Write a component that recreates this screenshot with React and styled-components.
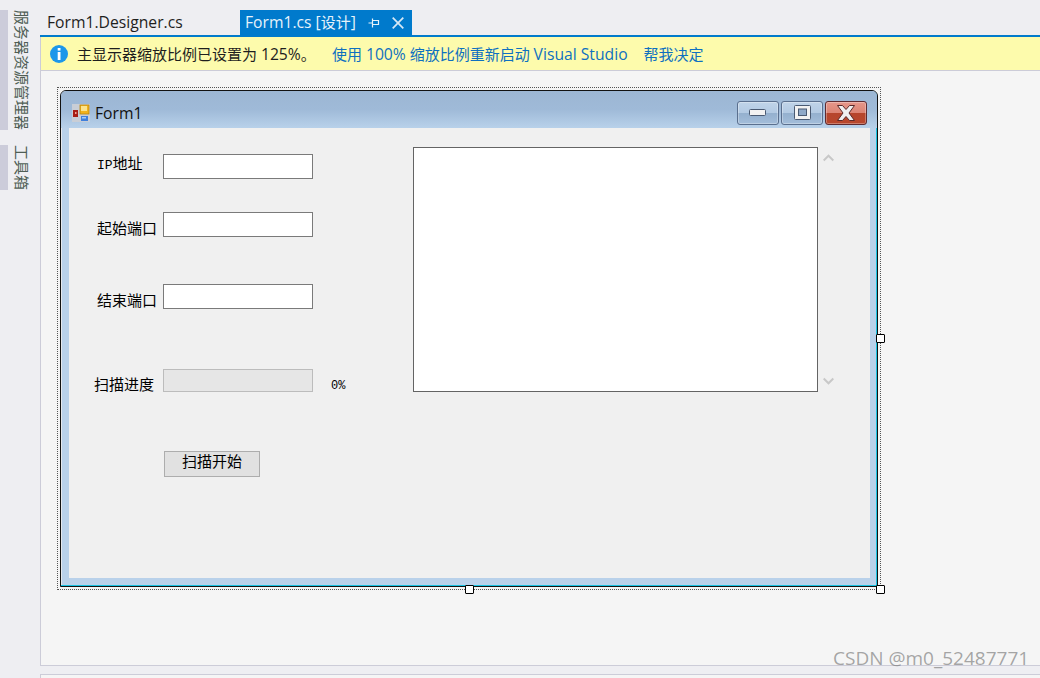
import React from "react";
import styled, { createGlobalStyle } from "styled-components";

const Global = createGlobalStyle`
  html, body { margin: 0; padding: 0; width: 1040px; height: 678px; overflow: hidden; background: #eeeef2; }
  * { box-sizing: border-box; }
  #root { width: 1040px; height: 678px; }
`;

const UI = `"Open Sans", "Noto Sans CJK SC", sans-serif`;
const CJK = `"Liberation Mono", "Noto Sans CJK SC", monospace`;

const Shell = styled.div`
  position: relative; display: flex; width: 1040px; height: 678px; background: #eeeef2; overflow: hidden;
`;
const Sidebar = styled.aside`
  width: 40px; flex: none; display: flex; flex-direction: column; gap: 15px; padding-top: 10px;
`;
const SideItem = styled.div`
  display: flex; height: ${p => p.$h}px;
`;
const SideBar = styled.div`
  width: 8px; background: #ccccda;
`;
const SideText = styled.div`
  writing-mode: vertical-rl; text-orientation: sideways; margin-left: 4px; width: 20px; font: 15px/20px "Noto Sans CJK SC", sans-serif;
  color: #4f5e55; white-space: nowrap;
`;
const Main = styled.main`
  flex: 1; display: flex; flex-direction: column; min-width: 0;
`;
const TabBar = styled.div`
  height: 35px; flex: none; display: flex; align-items: flex-end;
`;
const Tab = styled.div`
  height: 25px; display: flex; align-items: center; gap: 12px; font: 15px/25px ${UI};
  width: ${p => p.$w}px; padding-left: ${p => p.$pad}px;
  color: ${p => (p.$active ? "#e6f2fa" : "#1e1e1e")};
  background: ${p => (p.$active ? "#007acc" : "transparent")};
  white-space: nowrap;
`;
const UiLatin = styled.span`
  font-size: 15.7px;
`;
const TabActions = styled.span`
  display: flex; align-items: center; gap: 12px;
`;
const BlueLine = styled.div`
  height: 2px; flex: none; background: #007acc;
`;
const InfoBar = styled.div`
  height: 34px; flex: none; display: flex; align-items: center; background: #fdfbac; border-left: 1px solid #ccccd8;
  border-bottom: 1px solid #ccccd8; padding-left: 9px; font: 15px/20px ${UI}; color: #1e1e1e; white-space: nowrap;
`;
const InfoText = styled.span`
  margin-left: 9px; width: 255px;
`;
const InfoLink = styled.span`
  color: #0e70c0; margin-right: ${p => p.$gap}px;
`;
const Surface = styled.div`
  height: 595px; flex: none; background: #f5f5f5; border-left: 1px solid #ccccd8; border-bottom: 1px solid #ccccd8;
  padding: 16px 0 0 16px;
`;
const BottomPanel = styled.div`
  margin-top: 8px; flex: 1; background: #f5f5f5; border-left: 1px solid #ccccd8; border-top: 1px solid #ccccd8;
`;
const Selection = styled.div`
  position: relative; width: 824px; height: 503px; border: 1px dotted #555; padding: 2px;
`;
const Handle = styled.div`
  position: absolute; width: 9px; height: 9px; background: #fff; border: 1px solid #000; border-radius: 1px;
  left: ${p => p.$x}px; top: ${p => p.$y}px;
`;
const FormWindow = styled.div`
  width: 818px; height: 497px; display: flex; flex-direction: column; border: 1px solid #111;
  border-radius: 6px 6px 0 0; background: #b9d1ea; box-shadow: inset -1px -1px 0 #19c3e2, inset 1px 1px 0 #e4e8ee;
  padding-bottom: 8px; overflow: hidden;
`;
const TitleBar = styled.div`
  height: 37px; flex: none; display: flex; align-items: flex-start; padding: 0 10px 0 11px;
  background: linear-gradient(#9cb6d3, #9fbad8 50%, #b8d1ea);
`;
const IconSlot = styled.div`
  margin-top: 13px; height: 18px; display: flex;
`;
const FormTitle = styled.span`
  margin: 12px 0 0 5px; flex: 1; font: 15.7px/20px ${UI}; color: #111;
`;
const WinButtons = styled.div`
  display: flex; gap: 2px; margin-top: 10px;
`;
const WinButton = styled.div`
  width: 42px; height: 24px; border: 1px solid ${p => (p.$close ? "#5e2a30" : "#5a6f8e")}; border-radius: 3px; display: flex; align-items: center; justify-content: center;
  background: ${p => p.$close
    ? "linear-gradient(#e6978a, #dc8474 48%, #b6452c 50%, #b8472d)"
    : "linear-gradient(#c0d4e9, #b3cae3 48%, #94b0ce 50%, #a3bdda)"};
  box-shadow: inset 0 0 0 1px rgba(255,255,255,.3);
`;
const Client = styled.div`
  flex: 1; margin: 0 7px 0 8px; background: #f0f0f0; display: flex;
`;
const LeftColumn = styled.div`
  width: 344px; flex: none; display: flex; flex-direction: column;
`;
const Row = styled.div`
  display: flex; align-items: flex-start; height: ${p => p.$h}px; margin-top: ${p => p.$mt}px; padding-left: ${p => p.$pl}px;
`;
const FieldLabel = styled.label`
  width: ${p => p.$w}px; flex: none; margin-top: ${p => p.$mt}px; font: 15px/16px ${CJK}; color: #000; white-space: nowrap;
`;
const Latin = styled.span`
  font-size: 13px;
`;
const TextInput = styled.div`
  width: 150px; height: 25px; background: #fff; border: 1px solid #7a7a7a;
`;
const Progress = styled.div`
  width: 150px; height: 23px; background: #e6e6e6; border: 1px solid #bcbcbc;
`;
const Percent = styled.span`
  margin: 10px 0 0 18px; font: 12px/14px "Liberation Mono", monospace; color: #000;
`;
const ScanButton = styled.div`
  width: 96px; height: 26px; margin: 59px 0 0 95px; background: #e1e1e1; border: 1px solid #adadad; text-align: center;
  font: 15px/23px ${CJK}; color: #000;
`;
const RightColumn = styled.div`
  display: flex; padding-top: 19px;
`;
const OutputBox = styled.div`
  width: 405px; height: 245px; background: #fff; border: 1px solid #646464;
`;
const ScrollGutter = styled.div`
  width: 21px; height: 245px; display: flex; flex-direction: column; justify-content: space-between; align-items: center; padding: 7px 0;
`;

const Pin = () => (
  <svg width="12" height="10" viewBox="0 0 12 10" fill="none" stroke="#e6f2fa" strokeWidth="1.2">
    <path d="M.5 5H4.500M4.500 .5V9.500M4.500 2.500H10.500M4.500 6.500H10.500M10.500 2V7" />
  </svg>
);
const CloseX = () => (
  <svg width="12" height="12" viewBox="0 0 12 12" stroke="#d6e9f6" strokeWidth="1.7">
    <path d="M.7 .7 11.3 11.3M11.3 .7 .7 11.3" />
  </svg>
);
const InfoIcon = () => (
  <svg width="18" height="18" viewBox="0 0 18 18">
    <circle cx="9" cy="9" r="9" fill="#1c97ea" />
    <rect x="7.7" y="3" width="2.8" height="2.6" fill="#fff" />
    <rect x="7.7" y="7" width="2.8" height="8" fill="#fff" />
  </svg>
);
const FormIcon = () => (
  <svg width="18" height="18" viewBox="0 0 18 18">
    <rect width="18" height="18" fill="#c9ced6" />
    <rect x="1" y="6" width="5" height="7" fill="#a81d14" />
    <rect x="3" y="8" width="1.5" height="2" fill="#f0a090" />
    <rect x="8" y="1" width="9" height="9" fill="#f2b21c" stroke="#b9860e" strokeWidth=".8" />
    <rect x="9" y="2" width="6" height="5" fill="#fbe38c" />
    <rect x="9" y="12" width="7" height="5" fill="#3f7fdc" />
    <rect x="10" y="13" width="4" height="1.5" fill="#a9cdf5" />
  </svg>
);
const MinGlyph = () => (
  <svg width="18" height="8" viewBox="0 0 18 8">
    <rect x=".5" y=".5" width="16" height="6" rx="1" fill="#f2f2f2" stroke="#4a5a72" />
  </svg>
);
const MaxGlyph = () => (
  <svg width="17" height="16" viewBox="0 0 17 16">
    <rect x=".5" y=".5" width="16" height="14" rx="1" fill="#f2f2f2" stroke="#4a5a72" />
    <rect x="4.5" y="4" width="8" height="6.5" fill="#8fa9c8" stroke="#4a5a72" />
  </svg>
);
const CloseGlyph = () => (
  <svg width="18" height="16" viewBox="0 0 18 16">
    <path d="M.5 .5H5.500L9 4.500 12.500 .5H17.500L12 8 17.500 15.500H12.500L9 11.500 5.500 15.500H.5L6 8Z" fill="#f0f0f0" stroke="#5b2a2a" strokeWidth="1" />
  </svg>
);
const Chevron = ({ up }) => (
  <svg width="11" height="8" viewBox="0 0 11 8" fill="none" stroke="#c8c8c8" strokeWidth="2">
    <path d={up ? "M.7 6.500 5.500 1.700 10.300 6.500" : "M.7 1.500 5.500 6.300 10.300 1.500"} />
  </svg>
);
const Watermark = styled.div`
  position: absolute; left: 833px; top: 646px; font: 19px/24px "Open Sans", sans-serif; color: rgba(110,110,110,.6); white-space: nowrap;
`;

export default function App() {
  return (
    <Shell>
      <Global />
      <Sidebar>
        <SideItem $h={120}><SideBar /><SideText>服务器资源管理器</SideText></SideItem>
        <SideItem $h={45}><SideBar /><SideText>工具箱</SideText></SideItem>
      </Sidebar>
      <Main>
        <TabBar>
          <Tab $w={200} $pad={7}><UiLatin>Form1.Designer.cs</UiLatin></Tab>
          <Tab $active $w={172} $pad={5}>
            <span><UiLatin>Form1.cs [</UiLatin>设计<UiLatin>]</UiLatin></span>
            <TabActions><Pin /><CloseX /></TabActions>
          </Tab>
        </TabBar>
        <BlueLine />
        <InfoBar>
          <InfoIcon />
          <InfoText>主显示器缩放比例已设置为 <UiLatin>125%</UiLatin>。</InfoText>
          <InfoLink $gap={16}>使用 <UiLatin>100%</UiLatin> 缩放比例重新启动 <UiLatin>Visual Studio</UiLatin></InfoLink>
          <InfoLink $gap={0}>帮我决定</InfoLink>
        </InfoBar>
        <Surface>
          <Selection>
            <FormWindow>
              <TitleBar>
                <IconSlot><FormIcon /></IconSlot>
                <FormTitle>Form1</FormTitle>
                <WinButtons>
                  <WinButton><MinGlyph /></WinButton>
                  <WinButton><MaxGlyph /></WinButton>
                  <WinButton $close><CloseGlyph /></WinButton>
                </WinButtons>
              </TitleBar>
              <Client>
                <LeftColumn>
                  <Row $h={25} $mt={26} $pl={28}>
                    <FieldLabel $w={66} $mt={4}><Latin>IP</Latin>地址</FieldLabel>
                    <TextInput />
                  </Row>
                  <Row $h={25} $mt={33} $pl={28}>
                    <FieldLabel $w={66} $mt={11}>起始端口</FieldLabel>
                    <TextInput />
                  </Row>
                  <Row $h={25} $mt={47} $pl={28}>
                    <FieldLabel $w={66} $mt={11}>结束端口</FieldLabel>
                    <TextInput />
                  </Row>
                  <Row $h={23} $mt={60} $pl={25}>
                    <FieldLabel $w={69} $mt={10}>扫描进度</FieldLabel>
                    <Progress />
                    <Percent>0%</Percent>
                  </Row>
                  <ScanButton>扫描开始</ScanButton>
                </LeftColumn>
                <RightColumn>
                  <OutputBox />
                  <ScrollGutter>
                    <Chevron up />
                    <Chevron />
                  </ScrollGutter>
                </RightColumn>
              </Client>
            </FormWindow>
            <Handle $x={818} $y={246} />
            <Handle $x={407} $y={497} />
            <Handle $x={818} $y={497} />
          </Selection>
        </Surface>
        <BottomPanel />
      </Main>
      <Watermark>CSDN @m0_52487771</Watermark>
    </Shell>
  );
}
